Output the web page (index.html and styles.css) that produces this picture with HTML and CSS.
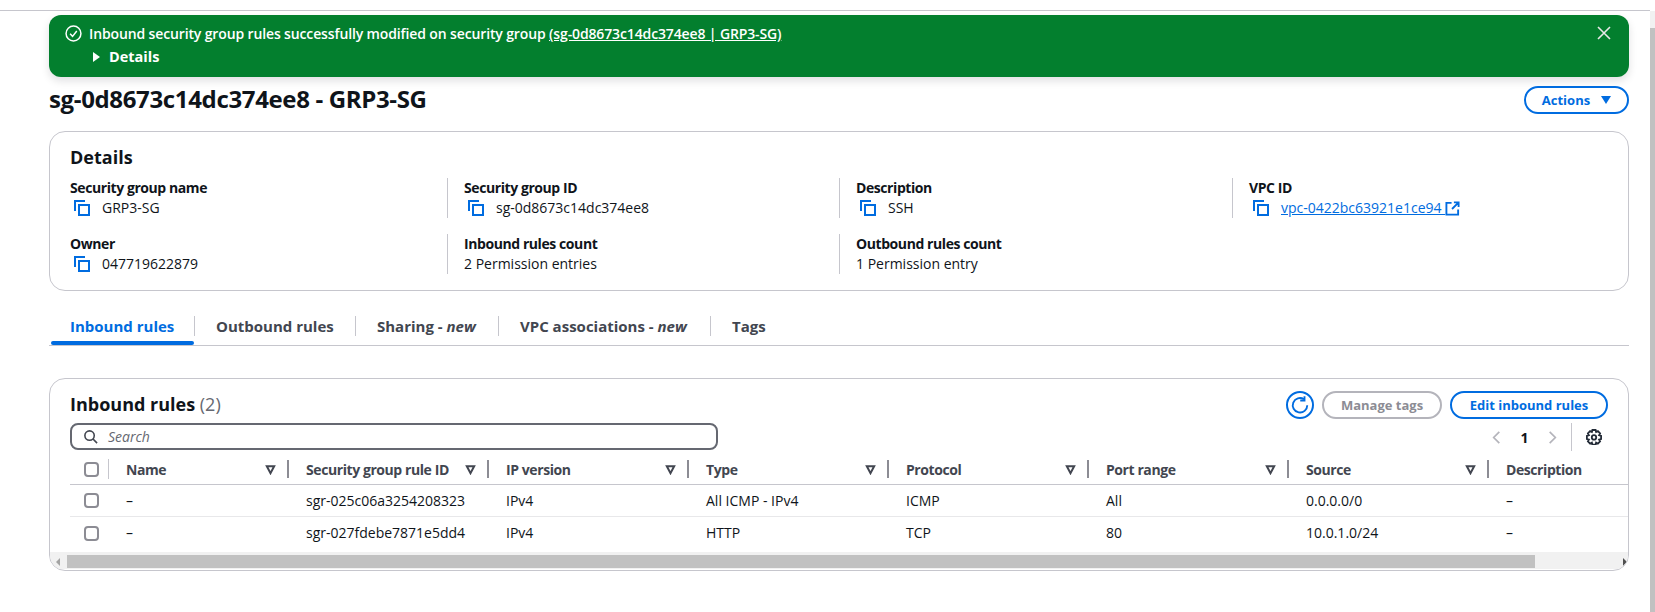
FILE: index.html
```html
<!DOCTYPE html>
<html lang="en">
<head>
    <meta charset="UTF-8">
    <title>sg-0d8673c14dc374ee8 - GRP3-SG</title>
    <link rel="stylesheet" href="styles.css">
</head>
<body>
    <div class="topline"></div>
    <div class="page-scroll"><div class="page-thumb"></div></div>

    <main class="content">
        <div class="flash">
            <svg class="flash-check" viewBox="0 0 16 16"><circle cx="8" cy="8" r="7"/><path d="M4.8 8.3l2.3 2.4 4-5"/></svg>
            <div class="flash-body">
                <div class="flash-msg">Inbound security group rules successfully modified on security group <a href="#">(sg-0d8673c14dc374ee8 | GRP3-SG)</a></div>
                <div class="flash-details"><span class="tri-right"></span>Details</div>
            </div>
            <svg class="flash-close" viewBox="0 0 16 16"><path d="M2 2l12 12M14 2L2 14"/></svg>
        </div>

        <div class="title-row">
            <h1>sg-0d8673c14dc374ee8 - GRP3-SG</h1>
            <button class="btn btn-actions">Actions<span class="tri-down"></span></button>
        </div>

        <section class="card details">
            <h2>Details</h2>
            <div class="details-grid">
                <div class="item">
                    <div class="label">Security group name</div>
                    <div class="value copy"><svg class="ico-copy" viewBox="0 0 16 16"><path d="M1 11V1h10"/><rect x="5" y="5" width="10" height="10"/></svg>GRP3-SG</div>
                </div>
                <div class="item sep">
                    <div class="label">Security group ID</div>
                    <div class="value copy"><svg class="ico-copy" viewBox="0 0 16 16"><path d="M1 11V1h10"/><rect x="5" y="5" width="10" height="10"/></svg>sg-0d8673c14dc374ee8</div>
                </div>
                <div class="item sep">
                    <div class="label">Description</div>
                    <div class="value copy"><svg class="ico-copy" viewBox="0 0 16 16"><path d="M1 11V1h10"/><rect x="5" y="5" width="10" height="10"/></svg>SSH</div>
                </div>
                <div class="item sep">
                    <div class="label">VPC ID</div>
                    <div class="value copy"><svg class="ico-copy" viewBox="0 0 16 16"><path d="M1 11V1h10"/><rect x="5" y="5" width="10" height="10"/></svg><a href="#">vpc-0422bc63921e1ce94&nbsp;</a><svg class="ico-ext" viewBox="0 0 16 16"><path d="M7 2H1.5v12.5H14V9M9.5 1.5h5v5M14 2L7.5 8.5"/></svg></div>
                </div>
                <div class="item">
                    <div class="label">Owner</div>
                    <div class="value copy"><svg class="ico-copy" viewBox="0 0 16 16"><path d="M1 11V1h10"/><rect x="5" y="5" width="10" height="10"/></svg>047719622879</div>
                </div>
                <div class="item sep">
                    <div class="label">Inbound rules count</div>
                    <div class="value">2 Permission entries</div>
                </div>
                <div class="item sep">
                    <div class="label">Outbound rules count</div>
                    <div class="value">1 Permission entry</div>
                </div>
            </div>
        </section>

        <nav class="tabs">
            <a class="tab active" href="#">Inbound rules</a>
            <a class="tab tab-outbound" href="#">Outbound rules</a>
            <a class="tab tab-sharing" href="#">Sharing - <em>new</em></a>
            <a class="tab tab-vpc" href="#">VPC associations - <em>new</em></a>
            <a class="tab tab-last" href="#">Tags</a>
        </nav>

        <section class="card rules">
            <div class="rules-head">
                <h2>Inbound rules <span class="count">(2)</span></h2>
                <div class="rules-actions">
                    <button class="btn-refresh"><svg viewBox="0 0 16 16"><path d="M13.800 8.200A5.800 5.800 0 1 1 11.200 3.400"/><path d="M11.600 1V4.400H8.200"/></svg></button>
                    <button class="btn btn-off">Manage tags</button>
                    <button class="btn btn-edit">Edit inbound rules</button>
                </div>
            </div>

            <div class="filter-row">
                <div class="search">
                    <svg viewBox="0 0 16 16"><circle cx="7" cy="7" r="5"/><path d="M10.7 10.7L15 15"/></svg>
                    <span>Search</span>
                </div>
                <div class="pager">
                    <svg class="chev" viewBox="0 0 16 16"><path d="M11 2L5 8l6 6"/></svg>
                    <span class="page-num">1</span>
                    <svg class="chev" viewBox="0 0 16 16"><path d="M5 2l6 6-6 6"/></svg>
                    <span class="pager-sep"></span>
                    <svg class="gear" viewBox="0 0 16 16"><path d="M6.4 1h3.2l.5 2 1.8-.9 2.2 2.3-1 1.8 2 .6v3.2l-2 .5 1 1.8-2.2 2.3-1.8-1-.5 2.1H6.4l-.5-2.1-1.8 1-2.2-2.3 1-1.8-2-.5V6.800l2-.6-1-1.800 2.200-2.300 1.800.9z"/><circle cx="8" cy="8.400" r="2.200"/></svg>
                </div>
            </div>

            <div class="table">
                <div class="row row-head">
                    <div class="cell cell-check"><span class="checkbox"></span></div>
                    <div class="cell">Name<svg class="sort" viewBox="0 0 12 12"><path d="M2 2.500h8L6 10z"/></svg></div>
                    <div class="cell">Security group rule ID<svg class="sort" viewBox="0 0 12 12"><path d="M2 2.500h8L6 10z"/></svg></div>
                    <div class="cell">IP version<svg class="sort" viewBox="0 0 12 12"><path d="M2 2.500h8L6 10z"/></svg></div>
                    <div class="cell">Type<svg class="sort" viewBox="0 0 12 12"><path d="M2 2.500h8L6 10z"/></svg></div>
                    <div class="cell">Protocol<svg class="sort" viewBox="0 0 12 12"><path d="M2 2.500h8L6 10z"/></svg></div>
                    <div class="cell">Port range<svg class="sort" viewBox="0 0 12 12"><path d="M2 2.500h8L6 10z"/></svg></div>
                    <div class="cell">Source<svg class="sort" viewBox="0 0 12 12"><path d="M2 2.500h8L6 10z"/></svg></div>
                    <div class="cell cell-end">Description</div>
                </div>
                <div class="row">
                    <div class="cell cell-check"><span class="checkbox"></span></div>
                    <div class="cell">–</div>
                    <div class="cell">sgr-025c06a3254208323</div>
                    <div class="cell">IPv4</div>
                    <div class="cell">All ICMP - IPv4</div>
                    <div class="cell">ICMP</div>
                    <div class="cell">All</div>
                    <div class="cell">0.0.0.0/0</div>
                    <div class="cell">–</div>
                </div>
                <div class="row row-last">
                    <div class="cell cell-check"><span class="checkbox"></span></div>
                    <div class="cell">–</div>
                    <div class="cell">sgr-027fdebe7871e5dd4</div>
                    <div class="cell">IPv4</div>
                    <div class="cell">HTTP</div>
                    <div class="cell">TCP</div>
                    <div class="cell">80</div>
                    <div class="cell">10.0.1.0/24</div>
                    <div class="cell">–</div>
                </div>
            </div>

            <div class="hscroll">
                <span class="arrow-left"></span>
                <div class="hthumb"></div>
                <span class="arrow-right"></span>
            </div>
        </section>
    </main>
</body>
</html>
```

FILE: styles.css
```css
html, body {
    margin: 0;
    height: 612px;
    overflow: hidden;
    background-color: #fff;
}
body {
    font-family: "Open Sans", Roboto, sans-serif;
    font-size: 14px;
    color: #0f141a;
}
a {
    color: #006ce0;
}
h1, h2 {
    margin: 0;
}
button {
    font-family: inherit;
}

.topline {
    height: 10px;
    border-bottom: 1px solid #c6c6cd;
    margin-right: 5px;
}
.page-scroll {
    position: absolute;
    top: 11px;
    right: 0;
    width: 5px;
    height: 601px;
    background-color: #f1f1f1;
}
.page-thumb {
    margin-top: 17px;
    height: 584px;
    background-color: #c1c1c1;
}

.content {
    width: 1580px;
    margin-left: 49px;
}

/* flash */
.flash {
    margin-top: 4px;
    height: 62px;
    box-sizing: border-box;
    padding: 10px 18px 0 16px;
    display: flex;
    background-color: #037f2e;
    color: #fff;
    border-radius: 12px;
    box-shadow: 0 4px 8px rgba(0, 7, 22, 0.12);
}
.flash-check {
    width: 17px;
    height: 17px;
    fill: none;
    stroke: #fff;
    stroke-width: 1.4;
}
.flash-body {
    flex: 1;
    margin-left: 7px;
    font-weight: 600;
    font-size: 14px;
    letter-spacing: -0.13px;
    line-height: 17px;
}
.flash-msg a {
    color: #fff;
}
.flash-details {
    margin-top: 6px;
    padding-left: 4px;
    display: flex;
    align-items: center;
    font-size: 14.5px;
    font-weight: 700;
    letter-spacing: 0;
    line-height: 18px;
}
.tri-right {
    width: 0;
    height: 0;
    border-left: 7px solid #fff;
    border-top: 5px solid transparent;
    border-bottom: 5px solid transparent;
    margin-right: 9px;
}
.flash-close {
    width: 16px;
    height: 16px;
    margin-right: -1px;
    fill: none;
    stroke: #e8e8e8;
    stroke-width: 1.6;
}

/* header */
.title-row {
    margin-top: 9px;
    height: 28px;
    display: flex;
    align-items: center;
    justify-content: space-between;
}
h1 {
    font-size: 24px;
    font-weight: 700;
    letter-spacing: -0.35px;
    line-height: 28px;
    margin-top: -3px;
}
.btn {
    height: 28px;
    box-sizing: border-box;
    border-radius: 14px;
    border: 2px solid #006ce0;
    background-color: #fff;
    color: #006ce0;
    font-size: 13px;
    font-weight: 700;
    padding: 0;
    display: flex;
    align-items: center;
    justify-content: center;
}
.btn-actions {
    width: 105px;
}
.tri-down {
    width: 0;
    height: 0;
    border-top: 8px solid #006ce0;
    border-left: 5.5px solid transparent;
    border-right: 5.5px solid transparent;
    margin-left: 11px;
}

/* cards */
.card {
    border: 1px solid #c6c6cd;
    border-radius: 16px;
    box-sizing: border-box;
}
.card h2 {
    font-size: 18px;
    font-weight: 700;
    line-height: 24px;
}

.details {
    margin-top: 17px;
    height: 160px;
    padding: 13px 20px 0;
}
.details-grid {
    margin-top: 9px;
    display: grid;
    grid-template-columns: 377px 392px 393px 1fr;
    row-gap: 16px;
}
.item {
    height: 40px;
}
.item.sep {
    border-left: 1px solid #c6c6cd;
    padding-left: 16px;
}
.label {
    font-weight: 700;
    font-size: 14px;
    letter-spacing: -0.42px;
    line-height: 20px;
}
.value {
    font-size: 14px;
    line-height: 20px;
    display: flex;
    align-items: center;
}
.ico-copy {
    width: 16px;
    height: 16px;
    margin: 0 12px 0 4px;
    fill: none;
    stroke: #006ce0;
    stroke-width: 2;
}
.ico-ext {
    width: 15px;
    height: 15px;
    fill: none;
    stroke: #006ce0;
    stroke-width: 2;
}

/* tabs */
.tabs {
    height: 55px;
    box-sizing: border-box;
    border-bottom: 1px solid #c6c6cd;
    padding: 25px 0 0 2px;
    display: flex;
    font-size: 15px;
    font-weight: 700;
}
.tab {
    height: 20px;
    line-height: 20px;
    color: #424650;
    text-decoration: none;
    box-sizing: border-box;
    border-right: 1px solid #c6c6cd;
    padding-left: 21px;
    white-space: nowrap;
}
.tab em {
    font-style: italic;
}
.tab.active {
    width: 144px;
    padding-left: 19px;
    color: #006ce0;
    position: relative;
}
.tab.active::after {
    content: "";
    position: absolute;
    left: 0;
    right: 0;
    top: 25px;
    height: 4px;
    border-radius: 2px;
    background-color: #006ce0;
}
.tab-outbound {
    width: 161px;
}
.tab-sharing {
    width: 143px;
}
.tab-vpc {
    width: 212px;
}
.tab-last {
    border-right: none;
}

/* rules table */
.rules {
    margin-top: 32px;
    height: 193px;
    overflow: hidden;
}
.rules-head {
    height: 44px;
    padding: 12px 20px 0;
    box-sizing: border-box;
    display: flex;
    justify-content: space-between;
}
.rules-head h2 {
    margin-top: 1px;
}
.count {
    font-weight: 400;
    color: #656871;
}
.rules-actions {
    display: flex;
    gap: 8px;
}
.btn-refresh {
    width: 28px;
    height: 28px;
    border: 2px solid #006ce0;
    border-radius: 50%;
    background-color: #fff;
    padding: 2px;
}
.btn-refresh svg {
    display: block;
    fill: none;
    stroke: #006ce0;
    stroke-width: 1.5;
}
.btn-off {
    width: 120px;
    border-color: #b4b4bb;
    color: #8c8c94;
}
.btn-edit {
    width: 158px;
}

.filter-row {
    height: 28px;
    padding: 0 26px 0 20px;
    display: flex;
    justify-content: space-between;
}
.search {
    width: 648px;
    height: 27px;
    box-sizing: border-box;
    border: 2px solid #656871;
    border-radius: 8px;
    display: flex;
    align-items: center;
    padding-left: 11px;
    color: #656871;
    font-size: 14px;
    font-style: italic;
}
.search svg {
    width: 15px;
    height: 15px;
    margin-right: 10px;
    fill: none;
    stroke: #424650;
    stroke-width: 1.7;
}
.pager {
    display: flex;
    align-items: center;
}
.chev {
    width: 15px;
    height: 15px;
    fill: none;
    stroke: #b4b4bb;
    stroke-width: 1.8;
}
.page-num {
    width: 41px;
    text-align: center;
    font-weight: 700;
}
.pager-sep {
    width: 1px;
    height: 28px;
    background-color: #c6c6cd;
    margin-left: 11px;
    margin-right: 14px;
}
.gear {
    width: 16px;
    height: 16px;
    fill: none;
    stroke: #232b37;
    stroke-width: 1.8;
}

.table {
    margin-left: 20px;
    margin-top: 6px;
}
.row {
    display: grid;
    grid-template-columns: 39px 180px repeat(6, 200px) 1fr;
    height: 32px;
    border-bottom: 1px solid #e8e8ea;
    box-sizing: border-box;
    font-size: 14px;
    white-space: nowrap;
}
.row-head {
    height: 28px;
    border-bottom-color: #c6c6cd;
    font-weight: 700;
    letter-spacing: -0.42px;
    color: #424650;
}
.row-last {
    border-bottom: none;
}
.cell {
    padding-left: 17px;
    display: flex;
    align-items: center;
    position: relative;
}
.row-last .cell,
.row-head .cell {
    top: -1px;
}
.row-head .cell:not(.cell-check):not(.cell-end)::after {
    content: "";
    position: absolute;
    right: 0;
    top: 4px;
    height: 18px;
    width: 2px;
    background-color: #8c8c94;
}
.cell-check {
    padding-left: 14px;
}
.row-last .cell-check,
.row-head .cell-check {
    top: 0;
}
.row-head .cell-check {
    border-right: 1px solid #c6c6cd;
    box-sizing: border-box;
    height: 20px;
    margin-top: 2px;
}
.checkbox {
    width: 15px;
    height: 15px;
    box-sizing: border-box;
    border: 2px solid #8c8c94;
    border-radius: 4px;
}
.sort {
    position: absolute;
    right: 13px;
    top: 8px;
    width: 11px;
    height: 11px;
    fill: none;
    stroke: #424650;
    stroke-width: 2.2;
}

.hscroll {
    height: 17px;
    margin-top: 3px;
    padding-top: 2px;
    box-sizing: border-box;
    background-color: #f1f1f1;
    display: flex;
    align-items: center;
}
.arrow-left {
    width: 0;
    height: 0;
    border-right: 4px solid #a3a3a3;
    border-top: 4px solid transparent;
    border-bottom: 4px solid transparent;
    margin-left: 6px;
}
.hthumb {
    width: 1468px;
    height: 13px;
    margin-left: 7px;
    background-color: #c1c1c1;
}
.arrow-right {
    width: 0;
    height: 0;
    border-left: 4px solid #505050;
    border-top: 4px solid transparent;
    border-bottom: 4px solid transparent;
    margin-left: 88px;
}
```
